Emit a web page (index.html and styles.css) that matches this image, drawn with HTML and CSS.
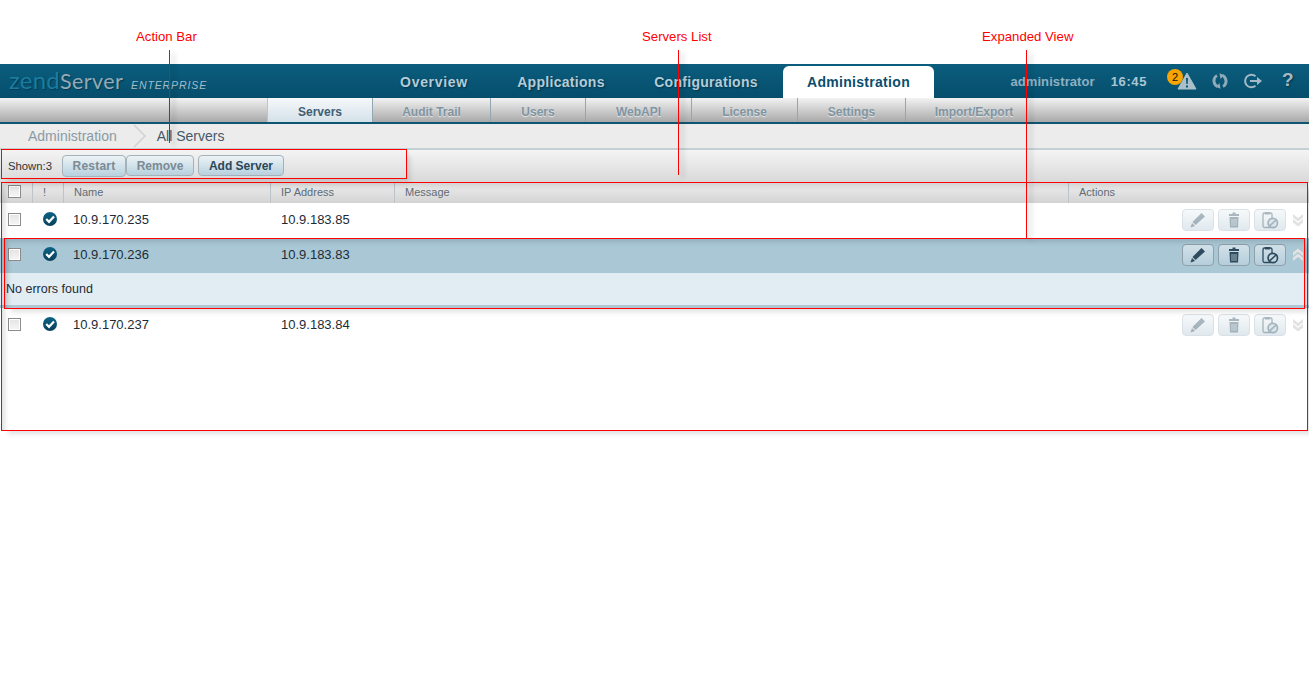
FILE: index.html
```html
<!DOCTYPE html>
<html lang="en">
<head>
<meta charset="utf-8">
<title>Zend Server - All Servers</title>
<link rel="stylesheet" href="styles.css">
</head>
<body>
<div class="page">
  <div class="top-space"></div>
  <header class="header">
    <div class="logo"><span class="logo-zend">zend</span><span class="logo-server">Server</span><span class="logo-ent">ENTERPRISE</span></div>
    <nav class="nav">
      <a class="nav-tab">Overview</a>
      <a class="nav-tab">Applications</a>
      <a class="nav-tab">Configurations</a>
      <a class="nav-tab active">Administration</a>
    </nav>
    <div class="user">
      <span class="user-name">administrator</span>
      <span class="user-time">16:45</span>
      <span class="alert">
        <svg class="ic-alert" width="20" height="18" viewBox="0 0 20 18"><path d="M10 1 L19 17 H1 Z" fill="#a9bfca" stroke="#a9bfca" stroke-linejoin="round"/><path d="M9 6h2l-.3 6H9.3zM9 13.5h2V15.500H9z" fill="#0a5676"/></svg>
        <span class="badge">2</span>
      </span>
      <svg class="ic-refresh" width="16" height="16" viewBox="0 0 16 16" fill="none" stroke="#8fabb9" stroke-width="3"><path d="M5 2.500 C2 4 1.200 8 2.800 11 C3.400 12.200 4.400 13 5.500 13.500"/><path d="M11 13.500 C14 12 14.800 8 13.200 5 C12.600 3.800 11.600 3 10.500 2.500"/><path d="M7.500 10 L4 14 L8.500 15.800 Z M8.500 6 L12 2 L7.500 .2 Z" fill="#8fabb9" stroke="none"/></svg>
      <svg class="ic-logout" width="20" height="16" viewBox="0 0 20 16" fill="none" stroke="#a3bac6" stroke-width="2"><path d="M12.500 3.200 A6.300 6.300 0 1 0 12.500 12.800"/><path d="M7 8 H16"/><path d="M14 4 L19 8 L14 12 Z" fill="#a3bac6" stroke="none"/></svg>
      <span class="help">?</span>
    </div>
  </header>
  <nav class="subnav">
    <a class="sub-tab active">Servers</a>
    <a class="sub-tab">Audit Trail</a>
    <a class="sub-tab">Users</a>
    <a class="sub-tab">WebAPI</a>
    <a class="sub-tab">License</a>
    <a class="sub-tab">Settings</a>
    <a class="sub-tab">Import/Export</a>
  </nav>
  <div class="crumbs">
    <span class="crumb">Administration</span>
    <svg class="crumb-sep" width="14" height="24" viewBox="0 0 14 24" fill="none" stroke="#d2d2d2" stroke-width="1.500"><path d="M1 1 L12 12 L1 23"/></svg>
    <span class="crumb current">All Servers</span>
  </div>
  <div class="actions">
    <span class="shown">Shown:3</span>
    <button class="btn dim r">Restart</button>
    <button class="btn dim m">Remove</button>
    <button class="btn add">Add Server</button>
  </div>
  <section class="list">
    <div class="row head">
      <div class="cell chk"><input type="checkbox" class="box" aria-label="Select all"></div>
      <div class="cell sep ex">!</div>
      <div class="cell sep">Name</div>
      <div class="cell sep">IP Address</div>
      <div class="cell sep">Message</div>
      <div class="cell sep">Actions</div>
    </div>

    <div class="row item">
      <div class="cell chk"><input type="checkbox" class="box" aria-label="Select"></div>
      <div class="cell st"><svg width="16" height="16" viewBox="0 0 16 16"><use href="#ok"/></svg></div>
      <div class="cell">10.9.170.235</div>
      <div class="cell">10.9.183.85</div>
      <div class="cell"></div>
      <div class="cell acts faded">
        <button class="ibtn" aria-label="Edit"><svg width="18" height="18" viewBox="0 0 18 18"><use href="#pencil"/></svg></button>
        <button class="ibtn" aria-label="Delete"><svg width="18" height="18" viewBox="0 0 18 18"><use href="#trash"/></svg></button>
        <button class="ibtn" aria-label="Disable"><svg width="18" height="18" viewBox="0 0 18 18"><use href="#disable"/></svg></button>
        <svg class="chev" width="12" height="14" viewBox="0 0 12 14"><use href="#chevdown"/></svg>
      </div>
    </div>

    <div class="row item open">
      <div class="cell chk"><input type="checkbox" class="box" aria-label="Select"></div>
      <div class="cell st"><svg width="16" height="16" viewBox="0 0 16 16"><use href="#ok"/></svg></div>
      <div class="cell">10.9.170.236</div>
      <div class="cell">10.9.183.83</div>
      <div class="cell"></div>
      <div class="cell acts">
        <button class="ibtn" aria-label="Edit"><svg width="18" height="18" viewBox="0 0 18 18"><use href="#pencil"/></svg></button>
        <button class="ibtn" aria-label="Delete"><svg width="18" height="18" viewBox="0 0 18 18"><use href="#trash"/></svg></button>
        <button class="ibtn" aria-label="Disable"><svg width="18" height="18" viewBox="0 0 18 18"><use href="#disable"/></svg></button>
        <svg class="chev up" width="12" height="14" viewBox="0 0 12 14"><use href="#chevdown"/></svg>
      </div>
    </div>
    <div class="detail">No errors found</div>

    <div class="row item">
      <div class="cell chk"><input type="checkbox" class="box" aria-label="Select"></div>
      <div class="cell st"><svg width="16" height="16" viewBox="0 0 16 16"><use href="#ok"/></svg></div>
      <div class="cell">10.9.170.237</div>
      <div class="cell">10.9.183.84</div>
      <div class="cell"></div>
      <div class="cell acts faded">
        <button class="ibtn" aria-label="Edit"><svg width="18" height="18" viewBox="0 0 18 18"><use href="#pencil"/></svg></button>
        <button class="ibtn" aria-label="Delete"><svg width="18" height="18" viewBox="0 0 18 18"><use href="#trash"/></svg></button>
        <button class="ibtn" aria-label="Disable"><svg width="18" height="18" viewBox="0 0 18 18"><use href="#disable"/></svg></button>
        <svg class="chev" width="12" height="14" viewBox="0 0 12 14"><use href="#chevdown"/></svg>
      </div>
    </div>
  </section>

  <div class="note n1">Action Bar</div>
  <div class="note n2">Servers List</div>
  <div class="note n3">Expanded View</div>
  <div class="vline v1"></div>
  <div class="vline v2"></div>
  <div class="vline v3"></div>
  <div class="frame f1"></div>
  <div class="frame f2"></div>
  <div class="frame f3"></div>
</div>

<svg class="defs" width="0" height="0" aria-hidden="true">
  <defs>
    <linearGradient id="okfill" x1="0" y1="0" x2="0" y2="1"><stop offset="0" stop-color="#0d6386"/><stop offset="1" stop-color="#093f5a"/></linearGradient>
    <symbol id="ok" viewBox="0 0 16 16">
      <circle cx="8" cy="8" r="7" fill="url(#okfill)"/>
      <path d="M4.200 8 L7 10.800 L12 5.500" fill="none" stroke="#fff" stroke-width="2.200"/>
    </symbol>
    <symbol id="pencil" viewBox="0 0 18 18">
      <path d="M12.500 2 L16 5.500 L6.500 14 L3.500 11 Z" fill="#2e4a5c"/>
      <path d="M3 12 L6 15 L1.500 16.500 Z" fill="#2e4a5c"/>
    </symbol>
    <symbol id="trash" viewBox="0 0 18 18">
      <path d="M7.500 1.500 H10.500 V3 H14 V5 H4 V3 H7.500 Z" fill="#2e4a5c"/>
      <path d="M4.500 6 H13.500 L13 16.500 H5 Z" fill="#2e4a5c"/>
      <path d="M7 8 V15 M9 8 V15 M11 8 V15" stroke="#9db6c3" stroke-width="1"/>
    </symbol>
    <symbol id="disable" viewBox="0 0 18 18">
      <rect x="2" y="2" width="9" height="14.500" rx="1.500" fill="none" stroke="#2e4a5c" stroke-width="1.300"/>
      <rect x="4" y="1" width="5" height="2.500" fill="#2e4a5c"/>
      <circle cx="11.800" cy="12" r="4.700" fill="#c3d7e1" stroke="#2e4a5c" stroke-width="1.700"/>
      <path d="M8.500 15 L15 9" stroke="#2e4a5c" stroke-width="1.700"/>
    </symbol>
    <symbol id="chevdown" viewBox="0 0 12 14">
      <path d="M1 1 L6 5 L11 1 V4.500 L6 8.500 L1 4.500 Z M1 6 L6 10 L11 6 V9.500 L6 13.500 L1 9.500 Z" fill="#e2e2e2"/>
    </symbol>
  </defs>
</svg>
</body>
</html>
```
FILE: styles.css
```css
* { box-sizing: border-box; }
html, body { margin: 0; padding: 0; background: #fff; }
body { font-family: "Liberation Sans", Arial, sans-serif; color: #222; }
.page { position: relative; width: 1309px; height: 674px; overflow: hidden; }
.defs { position: absolute; }
.top-space { height: 64px; }

.header {
  height: 34px;
  display: flex;
  background: linear-gradient(#0b5d7e, #064e6c);
}
.logo { width: 375px; flex: none; padding-left: 9px; display: flex; align-items: baseline; height: 34px; line-height: 32px; }
.logo-zend { font-family: "Lato", sans-serif; font-weight: 400; font-size: 24px; color: #1b7ca1; width: 51px; letter-spacing: .2px; text-shadow: 1px 1px 1px #033a52; }
.logo-server { font-family: "Lato", sans-serif; font-weight: 400; font-size: 21.500px; color: #93aab6; width: 71px; letter-spacing: .4px; text-shadow: 1px 1px 1px #033a52; }
.logo-ent { font-family: "Liberation Sans", sans-serif; font-style: italic; font-size: 10.500px; letter-spacing: .9px; color: #a3bcc8; }

.nav { display: grid; grid-template-columns: 118px 136px 154px 151px; align-items: end; height: 34px; }
.nav-tab {
  display: block;
  height: 32px;
  line-height: 32px;
  text-align: center;
  font-size: 14px;
  font-weight: bold;
  letter-spacing: .3px;
  color: #b4ccd8;
  text-shadow: 1px 1px 2px #02344a;
}
.nav-tab:first-child { letter-spacing: .7px; }
.nav-tab.active {
  background: #fff;
  color: #0a4e6d;
  border-radius: 6px 6px 0 0;
  text-shadow: none;
}

.user { margin-left: auto; display: flex; align-items: center; height: 34px; position: relative; padding-right: 16px; }
.user-name { font-size: 13px; font-weight: bold; letter-spacing: .1px; color: #8fb0c1; margin-right: 16px; }
.user-time { font-size: 13px; font-weight: bold; letter-spacing: .6px; color: #a9c6d4; margin-right: 30px; }
.alert { position: relative; display: block; width: 20px; height: 18px; margin-right: 15px; }
.ic-alert { display: block; }
.badge {
  position: absolute;
  left: -10px;
  top: -3px;
  width: 16px;
  height: 16px;
  border-radius: 50%;
  background: #f8a403;
  color: #111;
  font-size: 11px;
  line-height: 16px;
  text-align: center;
}
.ic-refresh { margin-right: 15px; }
.ic-logout { margin-right: 19px; }
.help { font-size: 19px; font-weight: bold; color: #a3bac6; width: 11px; line-height: 20px; margin-top: -3px; text-shadow: 1px 1px 2px #02344a; }

.subnav {
  height: 26px;
  padding-left: 267px;
  display: grid;
  grid-template-columns: 105px 118px 95px 106px 106px 108px 137px;
  grid-template-rows: 24px;
  background: linear-gradient(#f2f2f2, #a9a9a9);
  border-bottom: 2px solid #0f5470;
}
.sub-tab {
  display: block;
  height: 24px;
  text-align: center;
  line-height: 28px;
  font-size: 12px;
  font-weight: bold;
  color: #7f95a2;
  text-shadow: 0 1px 1px #e8e8e8;
  border-left: 1px solid #94a7b1;
}
.sub-tab.active { color: #3d6075; background: linear-gradient(#f6f8fa, #d4e1e9); border-left-color: #b9c6cd; }

.crumbs {
  height: 26px;
  padding: 0 0 0 28px;
  display: flex;
  align-items: center;
  background: #ececec;
  border-bottom: 2px solid #c2cfd3;
}
.crumb { font-size: 14px; color: #8a9aa4; }
.crumb.current { color: #45586a; }
.crumb-sep { margin: 0 10px 0 16px; }

.actions {
  height: 33px;
  display: flex;
  align-items: flex-start;
  padding: 5px 0 0 8px;
  background: linear-gradient(#f4f4f4, #d8d8d8);
}
.shown { font-size: 11.300px; line-height: 23px; color: #333; margin-right: 10px; }
.btn {
  height: 22px;
  padding: 0;
  font-family: inherit;
  font-size: 12px;
  font-weight: bold;
  border: 1px solid #a4b3bb;
  border-radius: 4px;
  background: linear-gradient(#edf3f6, #b7d1de);
  color: #7b8a94;
}
.btn.r { width: 64px; letter-spacing: .2px; }
.btn.m { width: 68px; margin-right: 4px; height: 21px; }
.btn.add { width: 86px; color: #2c475a; height: 21px; }

.list { height: 248px; background: #fff; }
.row {
  display: grid;
  grid-template-columns: 32px 31px 207px 124px 1fr 241px;
  align-items: center;
}
.cell { padding-left: 10px; min-width: 0; }
.head {
  height: 20px;
  font-size: 11px;
  color: #5e6c76;
  background: linear-gradient(#eeeeee, #d3d3d3);
  align-items: stretch;
  line-height: 19px;
}
.sep { border-left: 1px solid #bcc4c8; }
.chk { padding-left: 8px; display: flex; align-items: center; }
.head .chk { padding-bottom: 4px; }
.ex { padding-left: 10px; }
.box {
  appearance: none;
  -webkit-appearance: none;
  margin: 0;
  width: 13px;
  height: 13px;
  border: 1px solid #8b8b8b;
  background: linear-gradient(#e4e4e4, #f6f6f6);
  box-shadow: inset 0 0 0 1px #fff;
}
.item { height: 35px; padding-bottom: 2px; font-size: 13px; color: #1c2b36; }
.item .cell:nth-child(4) { padding-left: 11px; }
.open { background: #a9c7d5; }
.st { padding-left: 10px; padding-bottom: 2px; display: flex; }
.acts { display: flex; align-items: center; gap: 4px; padding-left: 114px; }
.ibtn {
  width: 32px;
  height: 22px;
  padding: 0;
  display: flex;
  align-items: center;
  justify-content: center;
  border: 1px solid #8fa0a9;
  border-radius: 4px;
  background: linear-gradient(#d2e1e9, #b5cedb);
}
.faded .ibtn { border-color: #d9e1e6; background: linear-gradient(#f6f9fa, #e0e9ee); }
.faded .ibtn svg { opacity: .36; }
.chev { margin-left: 2px; display: block; }
.chev.up { transform: scaleY(-1); }
.detail {
  height: 35px;
  padding: 0 0 3px 6px;
  line-height: 33px;
  font-size: 12.500px;
  color: #1c2b36;
  background: #e2edf3;
  border-bottom: 3px solid #b0c8d5;
}

.note { position: absolute; top: 29px; font-size: 13.200px; line-height: 15px; color: #f00; white-space: nowrap; }
.n1 { left: 136px; }
.n2 { left: 642px; }
.n3 { left: 982px; }
.vline { position: absolute; top: 50px; width: 1px; background: #f00; box-shadow: 4px 3px 5px rgba(0, 0, 0, .3); }
.v1 { left: 169px; height: 93px; }
.v2 { left: 678px; height: 125px; }
.v3 { left: 1026px; height: 188px; }
.frame { position: absolute; border: 1px solid #f00; box-shadow: 5px 5px 5px -2px rgba(0, 0, 0, .12), inset 5px 5px 5px -2px rgba(0, 0, 0, .12); }
.f1 { left: 1px; top: 149px; width: 406px; height: 30px; box-shadow: 5px 5px 5px -2px rgba(0, 0, 0, .12); }
.f2 { left: 1px; top: 182px; width: 1307px; height: 249px; }
.f3 { left: 4px; top: 238px; width: 1301px; height: 71px; }
```
